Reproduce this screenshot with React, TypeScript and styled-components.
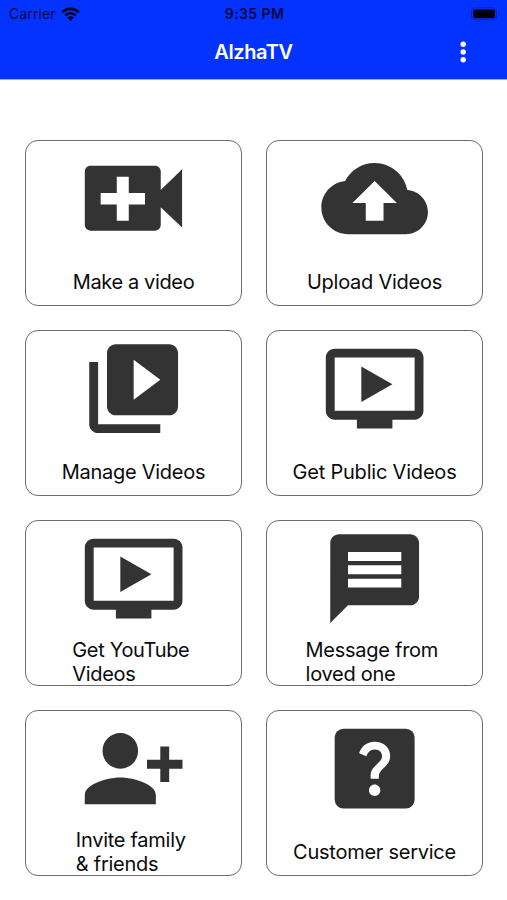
import React from 'react';
import styled, { createGlobalStyle } from 'styled-components';

const GlobalStyle = createGlobalStyle`
  * { box-sizing: border-box; }
  body { margin: 0; background: #fff; }
`;

const Screen = styled.div`
  width: 507px;
  height: 900px;
  overflow: hidden;
  display: flex;
  flex-direction: column;
  background: #fff;
  color: #0a0a0a;
  font-family: Inter, "Liberation Sans", sans-serif;
`;

const Header = styled.header`
  height: 79px;
  flex: none;
  background: #0433ff;
  box-shadow: 0 1px 0 #9aacff;
`;

const StatusBar = styled.div`
  height: 27px;
  padding: 1px 7px 0 9px;
  display: grid;
  grid-template-columns: 1fr auto 1fr;
  align-items: center;
  color: #03093f;
  font-size: 14px;
  line-height: 26px;
`;

const Carrier = styled.div`
  display: flex;
  align-items: center;
  gap: 5px;
  letter-spacing: 0.1px;
`;

const Clock = styled.div`
  font-weight: 600;
  font-size: 14px;
  letter-spacing: 0.4px;
`;

const Power = styled.div`
  display: flex;
  justify-content: flex-end;
`;

const NavBar = styled.div`
  height: 50px;
  display: grid;
  grid-template-columns: 1fr auto 1fr;
  align-items: center;
  color: #fff;
`;

const Title = styled.h1`
  grid-column: 2;
  margin: 0;
  font-size: 20px;
  line-height: 50px;
  font-weight: 600;
  letter-spacing: -0.4px;
`;

const MenuButton = styled.button`
  justify-self: end;
  width: 40px;
  height: 40px;
  margin-right: 24px;
  padding: 0;
  border: 0;
  background: none;
  display: grid;
  place-items: center;
`;

const Tiles = styled.main`
  display: grid;
  grid-template-columns: 217px 217px;
  grid-auto-rows: 166px;
  gap: 24px;
  padding: 61px 0 0 25px;
`;

const Tile = styled.button`
  border: 1px solid #6b6b6b;
  border-radius: 13px;
  background: #fff;
  padding: 4.4px 0 0;
  display: flex;
  flex-direction: column;
  align-items: center;
  color: inherit;
  font: inherit;
`;

const TileIcon = styled.svg`
  width: 106.6px;
  height: 106.6px;
  flex: none;
  fill: #333;
  overflow: visible;
`;

const TileLabel = styled.span<{ $tracking: number }>`
  height: 60px;
  flex: none;
  display: flex;
  align-items: center;
  white-space: pre;
  text-align: left;
  font-size: 20px;
  line-height: 24.4px;
  letter-spacing: ${(p) => p.$tracking}px;
`;

const VideoPlus = () => (
  <path
    fillRule="evenodd"
    d="M2.3 4.6h14.5c.75 0 1.3.55 1.3 1.3v4.16L22.9 5.4v13.1l-4.8-4.54v3.94c0 .75-.55 1.3-1.3 1.3H2.3c-.75 0-1.3-.55-1.3-1.3v-12c0-.75.55-1.3 1.3-1.3zM8.2 7.06v3.64H4.57v2.6H8.2V17h2.7v-3.7h3.65v-2.6H10.9V7.06z"
  />
);

const CloudUp = () => (
  <path d="M19.35 10.04C18.67 6.59 15.64 4 12 4 9.11 4 6.6 5.64 5.35 8.04 2.34 8.36 0 10.91 0 14c0 3.31 2.69 6 6 6h13c2.76 0 5-2.24 5-5 0-2.64-2.05-4.78-4.65-4.96zM14 13v4h-4v-4H7l5-5 5 5h-3z" />
);

const Library = () => (
  <path d="M4 6H2v14c0 1.1.9 2 2 2h14v-2H4V6zm16-4H8c-1.1 0-2 .9-2 2v12c0 1.1.9 2 2 2h12c1.1 0 2-.9 2-2V4c0-1.1-.9-2-2-2zm-8 12.5v-9l6 4.5-6 4.5z" />
);

const Television = () => (
  <path d="M21 3H3c-1.11 0-2 .89-2 2v12c0 1.1.89 2 2 2h5v2h8v-2h5c1.1 0 1.99-.9 1.99-2L23 5c0-1.11-.9-2-2-2zm0 14H3V5h18v12zm-5-6l-7 4V7z" />
);

const Message = () => (
  <path d="M20 2H4c-1.1 0-1.99.9-1.99 2L2 22l4-4h14c1.1 0 2-.9 2-2V4c0-1.1-.9-2-2-2zm-2 12H6v-2h12v2zm0-3H6V9h12v2zm0-3H6V6h12v2z" />
);

const PersonPlus = () => (
  <path d="M13 8c0-2.21-1.79-4-4-4S5 5.79 5 8s1.79 4 4 4 4-1.79 4-4zm2 2v2h3v3h2v-3h3v-2h-3V7h-2v3h-3zM1 18v2h16v-2c0-2.66-5.33-4-8-4s-8 1.34-8 4z" />
);

const Help = () => (
  <>
    <rect x="3" y="3" width="18" height="18" rx="2" />
    <path
      fill="#fff"
      transform="translate(4.32 4.05) scale(0.64)"
      d="M11.07 12.85c.77-1.39 2.25-2.21 3.11-3.44.91-1.29.4-3.7-2.18-3.7-1.69 0-2.52 1.28-2.87 2.34L6.54 6.96C7.25 4.83 9.18 3 11.99 3c2.35 0 3.96 1.07 4.78 2.41.7 1.15 1.11 3.3.03 4.9-1.2 1.77-2.35 2.31-2.97 3.45-.25.46-.35.76-.35 2.24h-2.89c-.01-.78-.13-2.05.48-3.15zM14 20c0 1.1-.9 2-2 2s-2-.9-2-2 .9-2 2-2 2 .9 2 2z"
    />
  </>
);

const tiles = [
  { label: 'Make a video', Icon: VideoPlus, tracking: -0.36 },
  { label: 'Upload Videos', Icon: CloudUp, tracking: -0.25 },
  { label: 'Manage Videos', Icon: Library, tracking: -0.28 },
  { label: 'Get Public Videos', Icon: Television, tracking: -0.2 },
  { label: 'Get YouTube \nVideos', Icon: Television, tracking: -0.33 },
  { label: 'Message from \nloved one', Icon: Message, tracking: -0.27 },
  { label: 'Invite family \n& friends', Icon: PersonPlus, tracking: -0.27 },
  { label: 'Customer service', Icon: Help, tracking: -0.25 },
];

export default function App() {
  return (
    <Screen>
      <GlobalStyle />
      <Header>
        <StatusBar>
          <Carrier>
            Carrier
            <svg width="19" height="15" viewBox="0 0 19 15" fill="none" stroke="#020520">
              <path d="M1.2 5.2a11.8 11.8 0 0 1 16.6 0" strokeWidth="2.8" />
              <path d="M4.1 8.4a7.6 7.6 0 0 1 10.8 0" strokeWidth="2.5" />
              <path d="M9.5 14 6.2 10.7a4.6 4.6 0 0 1 6.6 0z" fill="#020520" stroke="none" />
            </svg>
          </Carrier>
          <Clock>9:35 PM</Clock>
          <Power>
            <svg width="29" height="14" viewBox="0 0 29 14">
              <rect x="0.5" y="0.8" width="25" height="12" rx="3.4" fill="none" stroke="#0426bd" />
              <rect x="2" y="2.4" width="22" height="8.8" rx="1.8" fill="#000008" />
              <path d="M27 5v4c1.6-.7 1.6-3.3 0-4z" fill="#0426bd" />
            </svg>
          </Power>
        </StatusBar>
        <NavBar>
          <Title>AlzhaTV</Title>
          <MenuButton aria-label="Menu">
            <svg width="6" height="22" viewBox="0 0 6 22" fill="#fff">
              <circle cx="3.2" cy="3.3" r="2.7" />
              <circle cx="3.2" cy="11" r="2.7" />
              <circle cx="3.2" cy="18.7" r="2.7" />
            </svg>
          </MenuButton>
        </NavBar>
      </Header>
      <Tiles>
        {tiles.map(({ label, Icon, tracking }) => (
          <Tile key={label}>
            <TileIcon viewBox="-0.08 -0.08 24 24">
              <Icon />
            </TileIcon>
            <TileLabel $tracking={tracking}>{label}</TileLabel>
          </Tile>
        ))}
      </Tiles>
    </Screen>
  );
}
